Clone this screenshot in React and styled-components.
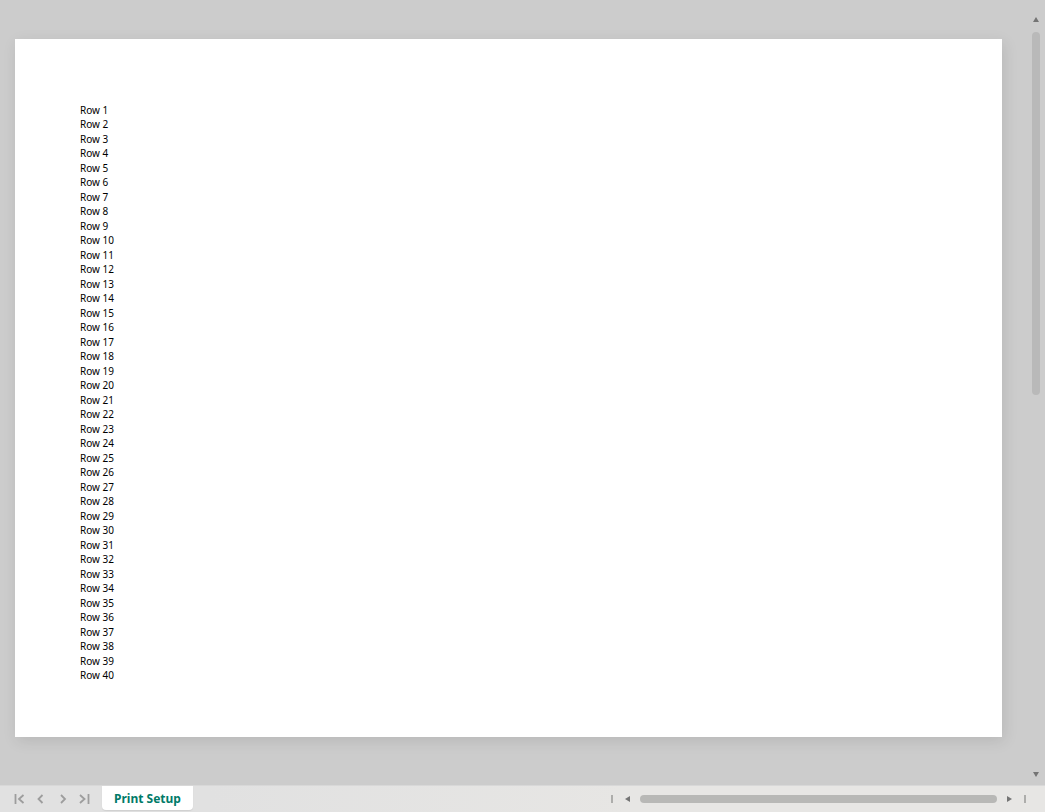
/*
Print preview of a sheet, with its sheet tabs and scroll bars.
*/

import React, { useState } from "react";
import styled, { createGlobalStyle } from "styled-components";

const GlobalStyle = createGlobalStyle`
  * {
    box-sizing: border-box;
  }

  body {
    margin: 0;
    overflow: hidden;
    background-color: #cccccc;
    font-family: "Noto Sans", "Open Sans", sans-serif;
  }
`;

const StyledViewer = styled.div`
  display: flex;
  flex-direction: column;
  height: 100vh;
`;

const StyledWorkspace = styled.main`
  display: flex;
  flex: 1;
  min-height: 0;
  overflow: hidden;
`;

const StyledCanvas = styled.div`
  flex: 1;
  padding: 39px 24px 48px 15px;
`;

const StyledPaper = styled.section`
  padding: 64px 65px 54px;
  background-color: white;
  box-shadow: 2px 4px 14px rgba(0, 0, 0, 0.1);
`;

const StyledRows = styled.ul`
  display: grid;
  grid-template-rows: repeat(20, 14px 15px);
  margin: 0;
  padding: 0;
  list-style: none;
  color: #000;
  font-size: 10px;
  line-height: 15px;
`;

const StyledButton = styled.button`
  display: flex;
  align-items: center;
  justify-content: center;
  width: 16px;
  height: 16px;
  padding: 0;
  border: none;
  background: none;
  color: ${({ $color }) => $color || "#747474"};
  cursor: pointer;
`;

const StyledVerticalBar = styled.div`
  display: flex;
  flex-direction: column;
  align-items: center;
  gap: 4px;
  width: 19px;
  padding: 12px 0 2px;
`;

const StyledVerticalTrack = styled.div`
  flex: 1;
  width: 8px;
  margin-bottom: 6px;
`;

const StyledVerticalThumb = styled.div`
  height: 50%;
  border-radius: 4px;
  background-color: #b9b9b9;
`;

const StyledFooter = styled.footer`
  display: flex;
  justify-content: space-between;
  height: 27px;
  border-top: 1px solid #d8d8d8;
  background: linear-gradient(90deg, #e1e1e1 20%, #e7e6e4 60%);
`;

const StyledSheets = styled.div`
  display: flex;
`;

const StyledNav = styled.nav`
  display: flex;
  align-items: center;
  gap: 6px;
  padding: 0 9px 0 11px;
`;

const StyledTab = styled.button`
  height: 24px;
  padding: 0 12px;
  border: none;
  border-radius: 0 0 4px 4px;
  background-color: white;
  box-shadow: 0 1px 1px rgba(0, 0, 0, 0.08);
  color: #007a68;
  font-family: inherit;
  font-size: 12px;
  font-weight: 700;
  line-height: 26px;
  cursor: pointer;
`;

const StyledHorizontalBar = styled.div`
  display: flex;
  align-items: center;
  width: 41.5%;
  padding-right: 19px;
`;

const StyledHorizontalTrack = styled.div`
  flex: 1;
  margin: 0 4px;
`;

const StyledHorizontalThumb = styled.div`
  height: 8px;
  border-radius: 4px;
  background-color: #b8b8b6;
`;

const StyledGrip = styled.span`
  width: 2px;
  height: 8px;
  margin: ${({ $last }) => ($last ? "0 0 0 7px" : "0 7px 0 0")};
  background-color: #adadab;
`;

/* Rows printed on the page */
const ROW_COUNT = 40;

const rows = Array.from({ length: ROW_COUNT }, (_, idx) => `Row ${idx + 1}`);

const navItems = [
  { label: "First sheet", path: "M2.5 1v10M10.5 2L6 6l4.5 4" },
  { label: "Previous sheet", path: "M7.5 2l-4 4 4 4" },
  { label: "Next sheet", path: "M4 2l4 4-4 4" },
  { label: "Last sheet", path: "M1 2l4.5 4L1 10M9.5 1v10" },
];

const arrows = {
  up: "M3 0L6 5H0z",
  down: "M0 0h6L3 5z",
  left: "M5 0v6L0 3z",
  right: "M1 0l5 3-5 3z",
};

const ArrowButton = ({ direction, label }) => (
  <StyledButton type="button" aria-label={label}>
    <svg width="6" height="6" viewBox="0 0 6 6" fill="currentColor">
      <path d={arrows[direction]} />
    </svg>
  </StyledButton>
);

const SheetNav = () => (
  <StyledNav aria-label="Sheets">
    {navItems.map(({ label, path }) => (
      <StyledButton key={label} type="button" aria-label={label} $color="#9d9d9d">
        <svg
          width="12"
          height="12"
          viewBox="0 0 12 12"
          fill="none"
          stroke="currentColor"
          strokeWidth="1.8"
        >
          <path d={path} />
        </svg>
      </StyledButton>
    ))}
  </StyledNav>
);

const App = () => {
  const [activeSheet, setActiveSheet] = useState("Print Setup");

  return (
    <StyledViewer>
      <GlobalStyle />
      <StyledWorkspace>
        <StyledCanvas>
          <StyledPaper id="page">
            <StyledRows>
              {rows.map((row) => (
                <li key={row}>{row}</li>
              ))}
            </StyledRows>
          </StyledPaper>
        </StyledCanvas>
        <StyledVerticalBar>
          <ArrowButton direction="up" label="Scroll up" />
          <StyledVerticalTrack>
            <StyledVerticalThumb
              role="scrollbar"
              aria-label="Vertical"
              aria-controls="page"
              aria-orientation="vertical"
              aria-valuenow={0}
            />
          </StyledVerticalTrack>
          <ArrowButton direction="down" label="Scroll down" />
        </StyledVerticalBar>
      </StyledWorkspace>
      <StyledFooter>
        <StyledSheets>
          <SheetNav />
          <StyledTab
            type="button"
            aria-pressed={activeSheet === "Print Setup"}
            onClick={() => setActiveSheet("Print Setup")}
          >
            Print Setup
          </StyledTab>
        </StyledSheets>
        <StyledHorizontalBar>
          <StyledGrip />
          <ArrowButton direction="left" label="Scroll left" />
          <StyledHorizontalTrack>
            <StyledHorizontalThumb
              role="scrollbar"
              aria-label="Horizontal"
              aria-controls="page"
              aria-orientation="horizontal"
              aria-valuenow={0}
            />
          </StyledHorizontalTrack>
          <ArrowButton direction="right" label="Scroll right" />
          <StyledGrip $last />
        </StyledHorizontalBar>
      </StyledFooter>
    </StyledViewer>
  );
};

export default App;
